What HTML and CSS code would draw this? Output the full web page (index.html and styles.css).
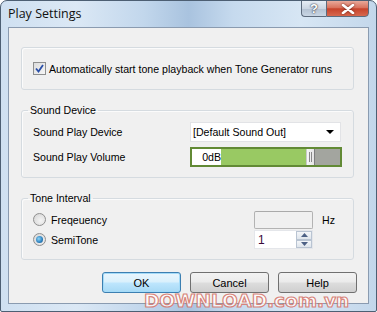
FILE: index.html
```html
<!DOCTYPE html>
<html lang="en">
<head>
    <meta charset="UTF-8">
    <title>Play Settings</title>
    <link rel="stylesheet" href="styles.css">
</head>
<body>
<div class="window">
    <div class="titlebar">
        <span class="title">Play Settings</span>
        <div class="caption-btns">
            <div class="cap-btn help-btn">?</div>
            <div class="cap-btn close-btn">
                <svg width="14" height="10" viewBox="0 0 14 10"><path d="M2 1 L12 9 M12 1 L2 9" stroke="#fff" stroke-width="2.6" stroke-linecap="round"/></svg>
            </div>
        </div>
    </div>
    <div class="client">
        <div class="group plain">
            <label class="check-row">
                <span class="checkbox">
                    <svg width="9" height="9" viewBox="0 0 9 9"><path d="M1 4.5 L3.5 7.5 L8 1" fill="none" stroke="#2a4fa8" stroke-width="1.8"/></svg>
                </span>
                Automatically start tone playback when Tone Generator runs
            </label>
        </div>

        <fieldset class="group sound">
            <legend>Sound Device</legend>
            <div class="row">
                <span class="label">Sound Play Device</span>
                <div class="combo">
                    <span>[Default Sound Out]</span>
                    <span class="arrow"></span>
                </div>
            </div>
            <div class="row">
                <span class="label">Sound Play Volume</span>
                <div class="volume">
                    <span class="db">0dB</span>
                    <span class="fill"></span>
                    <span class="thumb"><i></i><i></i></span>
                    <span class="rest"></span>
                </div>
            </div>
        </fieldset>

        <fieldset class="group tone">
            <legend>Tone Interval</legend>
            <div class="trow">
                <span class="radio"></span>
                <span class="rlabel">Freqeuency</span>
                <span class="hzbox"></span>
                <span class="unit">Hz</span>
            </div>
            <div class="trow">
                <span class="radio on"><i></i></span>
                <span class="rlabel">SemiTone</span>
                <div class="spin">
                    <span class="val">1</span>
                    <div class="spin-btns">
                        <span class="sb"><svg width="7" height="4" viewBox="0 0 7 4"><path d="M0 4 L3.5 0 L7 4Z" fill="#4d6185"/></svg></span>
                        <span class="sb"><svg width="7" height="4" viewBox="0 0 7 4"><path d="M0 0 L3.5 4 L7 0Z" fill="#4d6185"/></svg></span>
                    </div>
                </div>
            </div>
        </fieldset>

        <div class="buttons">
            <button class="btn default">OK</button>
            <button class="btn">Cancel</button>
            <button class="btn">Help</button>
        </div>
    </div>
    <div class="watermark">DOWNLOAD.com.vn</div>
</div>
</body>
</html>
```

FILE: styles.css
```css
body, html {
    margin: 0;
    padding: 0;
    background: #ffffff;
}
.window {
    position: relative;
    width: 377px;
    height: 312px;
    box-sizing: border-box;
    border: 1px solid #4d5f73;
    border-radius: 7px 7px 2px 2px;
    background: linear-gradient(90deg, #cfe0f1 0%, #dbe8f5 20%, #c2d7ec 38%, #a9c3df 50%, #c6daee 62%, #d7e6f4 80%, #c3d7eb 100%);
    font-family: "Liberation Sans", Arial, sans-serif;
    font-size: 10.6px;
    color: #000;
    overflow: hidden;
}
.titlebar {
    height: 26px;
    display: flex;
    justify-content: space-between;
    align-items: flex-start;
}
.title {
    font-family: "Open Sans", "Noto Sans", sans-serif;
    font-size: 12.5px;
    margin: 4px 0 0 7px;
    color: #111;
}
.caption-btns {
    display: flex;
    margin-right: 7px;
    margin-top: -1px;
}
.cap-btn {
    height: 17px;
    border: 1px solid #5d6b7d;
    box-sizing: border-box;
    display: flex;
    justify-content: center;
    align-items: center;
}
.help-btn {
    width: 25px;
    border-radius: 0 0 0 4px;
    border-right: none;
    background: linear-gradient(#e6edf5 0%, #cbd6e3 50%, #b3c1d2 51%, #c9d6e4 100%);
    color: #fff;
    font-weight: bold;
    font-size: 13px;
    text-shadow: 0 0 2px #334, 0 0 1px #334;
}
.close-btn {
    width: 43px;
    border-radius: 0 0 4px 0;
    background: linear-gradient(#e9a99a 0%, #d9725d 45%, #c7432b 52%, #d7684f 100%);
}
.close-btn svg {
    filter: drop-shadow(0 0 1px #6b2418);
}
.client {
    margin: 0 7px;
    height: 277px;
    box-sizing: border-box;
    border: 1px solid #8a9bb0;
    background: #f0f0f0;
    padding: 19px 0 0 12px;
}
.group {
    box-sizing: border-box;
    width: 333px;
    border: 1px solid #d5dbe0;
    border-radius: 3px;
    box-shadow: inset 1px 1px 0 #fbfbfb;
}
.plain {
    height: 43px;
    padding: 14px 0 0 11px;
}
.check-row {
    display: flex;
    align-items: center;
    gap: 3px;
    white-space: nowrap;
}
.checkbox {
    width: 13px;
    height: 13px;
    box-sizing: border-box;
    border: 1px solid #8e8f8f;
    background: linear-gradient(135deg, #dcdcdc, #f6f6f6);
    display: flex;
    justify-content: center;
    align-items: center;
}
fieldset.group {
    margin: 0;
    min-width: 0;
}
legend {
    padding: 0 2px;
    margin-left: -5px;
    line-height: 14px;
}
.sound {
    margin-top: 13px !important;
    height: 75px;
    padding: 5px 0 0 11px;
}
.row {
    display: flex;
    align-items: center;
    height: 20px;
    margin-bottom: 5px;
}
.label {
    width: 157px;
}
.combo {
    width: 151px;
    height: 20px;
    box-sizing: border-box;
    border: 1px solid #e2e3e6;
    background: #fff;
    display: flex;
    align-items: center;
    justify-content: space-between;
    padding: 0 6px 0 2px;
}
.arrow {
    width: 0;
    height: 0;
    border-left: 4px solid transparent;
    border-right: 4px solid transparent;
    border-top: 4px solid #000;
}
.volume {
    width: 152px;
    height: 20px;
    box-sizing: border-box;
    border: 2px solid #628a35;
    display: flex;
    background: #a3a59f;
}
.db {
    width: 29px;
    background: #fff;
    text-align: right;
    line-height: 16px;
}
.fill {
    width: 85px;
    background: #99c963;
}
.thumb {
    width: 9px;
    background: linear-gradient(90deg, #f6f6f6, #e4e4e4);
    border-left: 1px solid #c9c9c9;
    border-right: 1px solid #7d7d7d;
    box-sizing: border-box;
    display: flex;
    justify-content: center;
    align-items: center;
    gap: 1px;
}
.thumb i {
    width: 1px;
    height: 10px;
    background: #888;
}
.rest {
    flex: 1;
}
.tone {
    margin-top: 13px !important;
    height: 69px;
    padding: 5px 0 0 11px;
}
.trow {
    display: flex;
    align-items: center;
    height: 19px;
    margin-bottom: 1px;
}
.radio {
    width: 13px;
    height: 13px;
    box-sizing: border-box;
    border-radius: 50%;
    border: 1px solid #8f8f8f;
    background: radial-gradient(circle at 60% 60%, #f4f4f4, #d3d3d3);
    display: flex;
    justify-content: center;
    align-items: center;
}
.radio.on i {
    width: 7px;
    height: 7px;
    border-radius: 50%;
    background: radial-gradient(circle at 40% 40%, #8fd6f8, #2b7fbd 60%, #1a4f7e);
}
.rlabel {
    margin-left: 5px;
    width: 203px;
}
.hzbox {
    width: 59px;
    height: 18px;
    box-sizing: border-box;
    border: 1px solid #b3b3b3;
    border-top-color: #aaa;
    border-radius: 2px;
    background: #f0f0f0;
}
.unit {
    margin-left: 9px;
}
.spin {
    width: 59px;
    height: 19px;
    box-sizing: border-box;
    border: 1px solid #e4e6ea;
    background: #fff;
    display: flex;
    justify-content: space-between;
}
.val {
    padding-left: 3px;
    color: #3a0a3a;
    line-height: 19px;
    font-size: 12px;
}
.spin-btns {
    width: 16px;
    display: flex;
    flex-direction: column;
}
.sb {
    flex: 1;
    border: 1px solid #b9c4d2;
    background: linear-gradient(#f4f6f9, #dfe5ec);
    display: flex;
    justify-content: center;
    align-items: center;
}
.buttons {
    display: flex;
    justify-content: flex-end;
    gap: 9px;
    margin-top: 12px;
    padding-right: 11px;
}
.btn {
    width: 79px;
    height: 21px;
    box-sizing: border-box;
    border: 1px solid #707070;
    border-radius: 3px;
    background: linear-gradient(#f2f2f2 0%, #ebebeb 48%, #dddddd 52%, #cfcfcf 100%);
    font-family: "Liberation Sans", Arial, sans-serif;
    font-size: 11px;
    color: #000;
    padding: 0;
}
.btn.default {
    border-color: #3c7fb1;
    background: linear-gradient(#eaf6fd 0%, #d9f0fc 48%, #bee6fd 52%, #a7d9f5 100%);
    box-shadow: inset 0 0 0 1px #a4dbf8;
}
.watermark {
    position: absolute;
    left: 143px;
    top: 289px;
    font-family: "DejaVu Sans", sans-serif;
    font-weight: bold;
    font-size: 18.5px;
    color: rgba(255, 255, 255, 0.75);
    -webkit-text-stroke: 1.2px rgba(212, 118, 108, 0.9);
    white-space: nowrap;
}
```
